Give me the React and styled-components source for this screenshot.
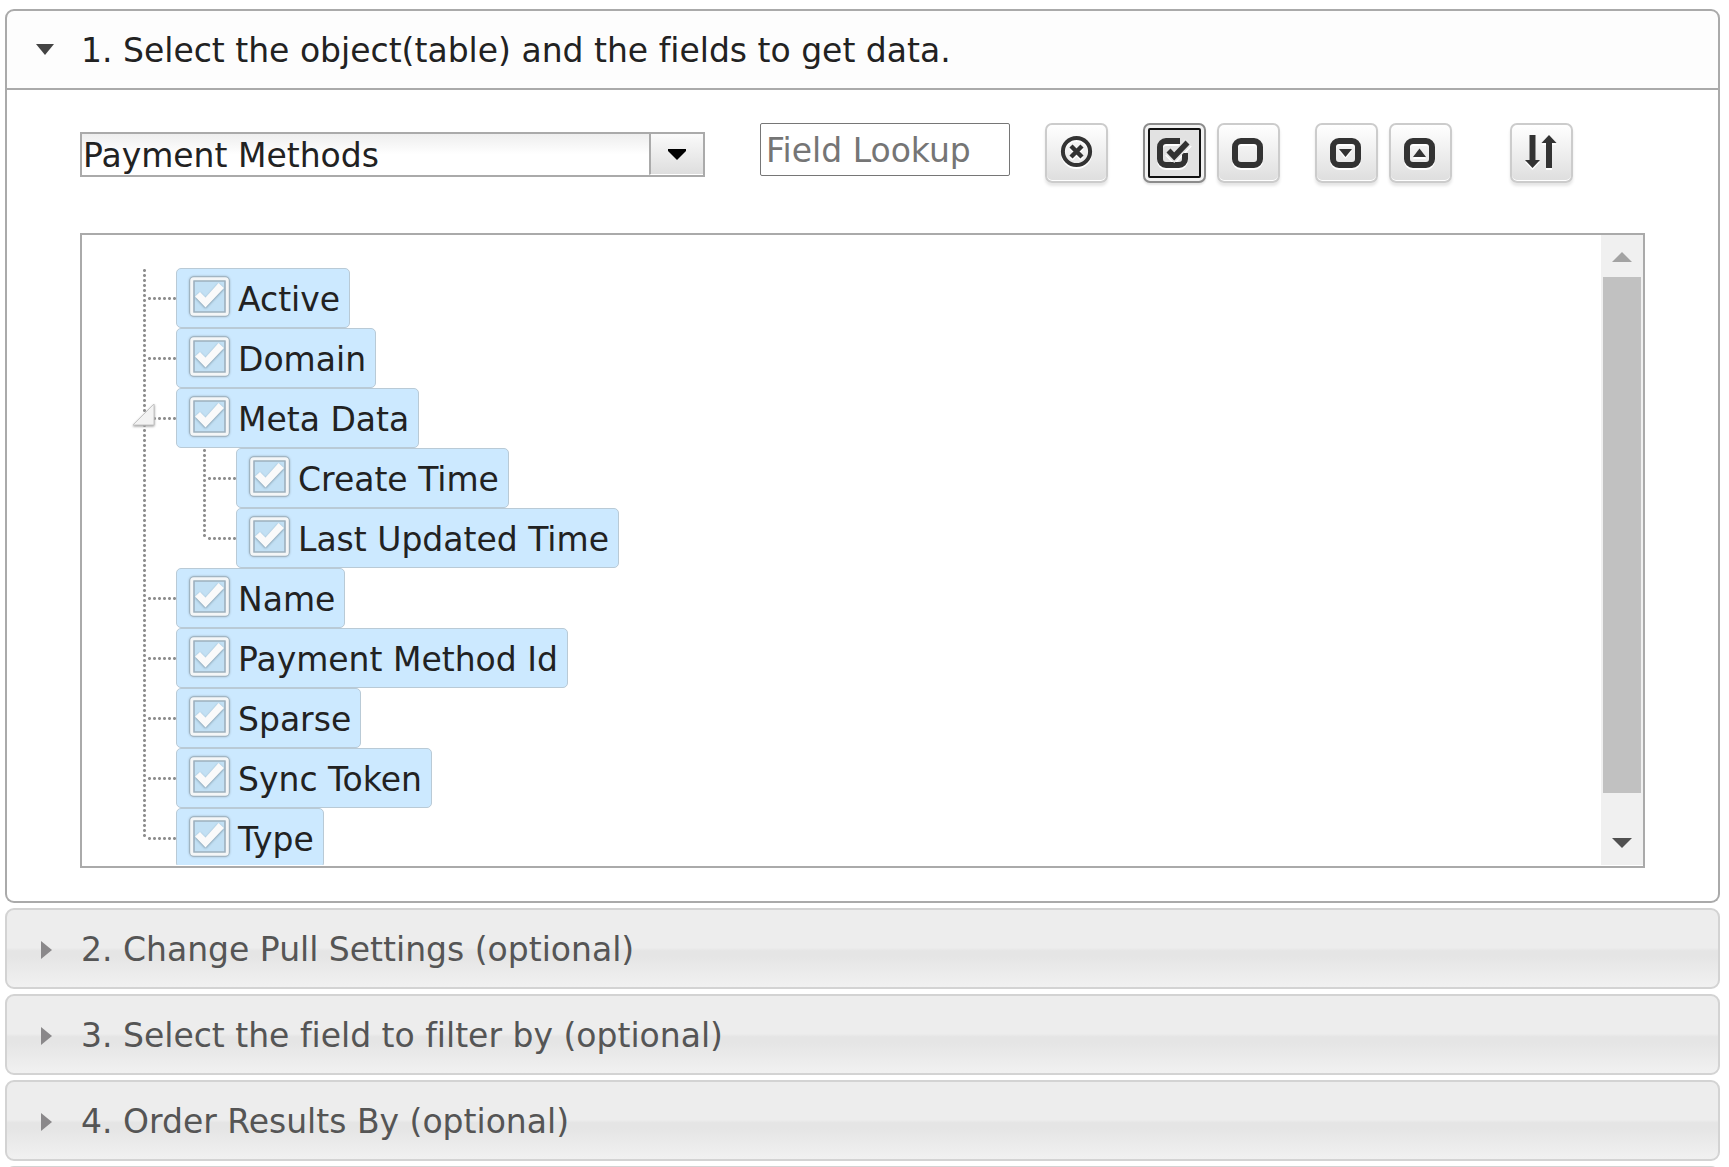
import { useState } from "react";
import styled, { createGlobalStyle, css } from "styled-components";

const GlobalStyle = createGlobalStyle`
  * {
    box-sizing: border-box;
  }
  body {
    margin: 0;
    background: #fff;
    font-family: Verdana, "DejaVu Sans", sans-serif;
    font-size: 33px;
    font-variant-ligatures: none;
    color: #222;
  }
`;

const tables = ["Payment Methods"];

const fields = [
  { label: "Active" },
  { label: "Domain" },
  {
    label: "Meta Data",
    children: [{ label: "Create Time" }, { label: "Last Updated Time" }],
  },
  { label: "Name" },
  { label: "Payment Method Id" },
  { label: "Sparse" },
  { label: "Sync Token" },
  { label: "Type" },
];

const sections = [
  "2. Change Pull Settings (optional)",
  "3. Select the field to filter by (optional)",
  "4. Order Results By (optional)",
];

const ClearIcon = () => (
  <Icon viewBox="0 0 37 36">
    <circle cx="18.5" cy="16.5" r="13.6" fill="none" stroke="#333" strokeWidth="4" />
    <path d="M13 11l11 11M24 11l-11 11" fill="none" stroke="#333" strokeWidth="4.4" />
  </Icon>
);

const CheckAllIcon = () => (
  <Icon viewBox="0 0 37 36">
    <path
      d="M24 6H10a6 6 0 0 0-6 6v12a6 6 0 0 0 6 6h13a6 6 0 0 0 6-6v-6"
      fill="none"
      stroke="#333"
      strokeWidth="6"
    />
    <path d="M12.5 15.5l5.7 6L32.5 6.5" fill="none" stroke="#e6e6e6" strokeWidth="9" />
    <path d="M12.5 15.5l5.7 6L31.5 7.5" fill="none" stroke="#333" strokeWidth="5.5" />
  </Icon>
);

const BoxIcon = ({ children }) => (
  <Icon viewBox="0 0 37 36">
    <rect x="5" y="6" width="25" height="24" rx="6" fill="none" stroke="#333" strokeWidth="6" />
    {children}
  </Icon>
);

const SortIcon = () => (
  <Icon viewBox="0 0 37 36">
    <path d="M6.5 0h6v25h4.500l-7.500 8-7.500-8h4.500z" fill="#333" />
    <path d="M23 33h6V8h4.500L26 0l-7.500 8H23z" fill="#333" />
  </Icon>
);

const TreeNode = ({ node, last }) => (
  <NodeItem $last={last}>
    <NodeRow>
      {node.children && (
        <Toggle aria-label={"Collapse " + node.label}>
          <ToggleIcon viewBox="0 0 26 26">
            <path d="M23 2v21H2z" fill="#f3f3f3" stroke="#c4c4c4" strokeWidth="1" strokeLinejoin="round" />
          </ToggleIcon>
        </Toggle>
      )}
      <NodeLabel>
        <CheckHolder>
          <Check type="checkbox" defaultChecked />
          <CheckMark viewBox="0 0 41 41">
            <rect x="3" y="3" width="35" height="35" rx="2" fill="#c2e0f4" stroke="#9db0bd" strokeWidth="5.6" />
            <rect x="2.7" y="2.7" width="35.6" height="35.6" rx="2" fill="none" stroke="#f4f6f7" strokeWidth="3" />
            <CheckTick d="M6 20.500l5-4.500 5.500 5.500L29.500 7l5.500 5-18.500 19.500z" fill="#fafafa" />
          </CheckMark>
        </CheckHolder>
        <span>{node.label}</span>
      </NodeLabel>
    </NodeRow>
    {node.children && (
      <NodeList $nested>
        {node.children.map((child, i) => (
          <TreeNode key={child.label} node={child} last={i === node.children.length - 1} />
        ))}
      </NodeList>
    )}
  </NodeItem>
);

const App = () => {
  const [lookup, setLookup] = useState("");

  return (
    <Page>
      <GlobalStyle />
      <OpenSection>
        <Header $open aria-expanded="true">
          <HeaderArrow viewBox="0 0 20 18">
            <path d="M1 2h18l-9 11z" fill="#444" />
          </HeaderArrow>
          1. Select the object(table) and the fields to get data.
        </Header>
        <Panel>
          <Toolbar>
            <SelectBox>
              <Select aria-label="Object">
                {tables.map((t) => (
                  <option key={t}>{t}</option>
                ))}
              </Select>
              <SelectArrow>
                <svg width="18" height="11" viewBox="0 0 18 11">
                  <path d="M0 0h18v2L9 11 0 2z" fill="#000" />
                </svg>
              </SelectArrow>
            </SelectBox>
            <Lookup
              type="text"
              aria-label="Field Lookup"
              placeholder="Field Lookup"
              value={lookup}
              onChange={(e) => setLookup(e.target.value)}
            />
            <ButtonGroup>
              <ToolButton aria-label="Clear lookup" onClick={() => setLookup("")}>
                <ClearIcon />
              </ToolButton>
            </ButtonGroup>
            <ButtonGroup>
              <ToolButton $active aria-label="Check all">
                <CheckAllIcon />
              </ToolButton>
              <ToolButton aria-label="Uncheck all">
                <BoxIcon />
              </ToolButton>
            </ButtonGroup>
            <ButtonGroup>
              <ToolButton aria-label="Expand all">
                <BoxIcon>
                  <path d="M11 14h13l-6.500 8z" fill="#333" />
                </BoxIcon>
              </ToolButton>
              <ToolButton aria-label="Collapse all">
                <BoxIcon>
                  <path d="M11 22h13l-6.500-8.500z" fill="#333" />
                </BoxIcon>
              </ToolButton>
            </ButtonGroup>
            <ButtonGroup $apart>
              <ToolButton aria-label="Sort fields">
                <SortIcon />
              </ToolButton>
            </ButtonGroup>
          </Toolbar>
          <TreeBox>
            <TreeView>
              <NodeList>
                {fields.map((node, i) => (
                  <TreeNode key={node.label} node={node} last={i === fields.length - 1} />
                ))}
              </NodeList>
            </TreeView>
            <ScrollBar>
              <ScrollEnd>
                <svg width="20" height="10" viewBox="0 0 20 10">
                  <path d="M0 10h20L10 0z" fill="#a3a3a3" />
                </svg>
              </ScrollEnd>
              <Thumb />
              <ScrollEnd>
                <svg width="20" height="10" viewBox="0 0 20 10">
                  <path d="M0 0h20L10 10z" fill="#505050" />
                </svg>
              </ScrollEnd>
            </ScrollBar>
          </TreeBox>
        </Panel>
      </OpenSection>
      {sections.map((title) => (
        <Header key={title} aria-expanded="false">
          <HeaderArrow viewBox="0 0 20 18">
            <path d="M6 0v18l11-9z" fill="#8a888a" />
          </HeaderArrow>
          {title}
        </Header>
      ))}
      <Header as="div" />
    </Page>
  );
};

const Page = styled.main`
  display: flex;
  flex-direction: column;
  gap: 5px;
  height: 100vh;
  padding: 9px 9px 0 5px;
  overflow: hidden;
`;

const OpenSection = styled.section`
  flex-shrink: 0;
`;

const Header = styled.button`
  display: flex;
  align-items: center;
  flex-shrink: 0;
  gap: 26px;
  width: 100%;
  height: 81px;
  padding: 2px 28px 0;
  border: 2px solid #d3d3d3;
  border-radius: 9px;
  background: linear-gradient(#ededed 49%, #e5e5e5 53%, #e5e5e5 60%, #f1f1f1);
  color: #555;
  font: inherit;
  text-align: left;

  ${(props) =>
    props.$open &&
    css`
      border-color: #aaa;
      border-radius: 9px 9px 0 0;
      background: #fdfdfd;
      color: #222;
    `}
`;

const HeaderArrow = styled.svg`
  flex-shrink: 0;
  width: 20px;
  height: 18px;
`;

const Panel = styled.div`
  padding: 33px 73px;
  border: 2px solid #aaa;
  border-top: none;
  border-radius: 0 0 9px 9px;
`;

const Toolbar = styled.div`
  display: flex;
  align-items: flex-start;
  margin-bottom: 50px;
`;

const SelectBox = styled.div`
  display: grid;
  flex: 0 1 625px;
  height: 45px;
  margin: 9px 55px 0 0;
  border: 2px solid #aaa;

  & > * {
    grid-area: 1 / 1;
  }
`;

const Select = styled.select`
  appearance: none;
  width: 100%;
  padding: 2px 54px 0 1px;
  border: none;
  border-radius: 0;
  background: linear-gradient(#eee, #fff 50%);
  color: #222;
  font: inherit;
`;

const SelectArrow = styled.span`
  display: flex;
  align-items: center;
  justify-content: center;
  justify-self: end;
  width: 54px;
  border-left: 2px solid #aaa;
  border-bottom: 1px solid #fff;
  background: linear-gradient(#fafafa, #dedede);
  pointer-events: none;
`;

const Lookup = styled.input`
  width: 250px;
  height: 53px;
  padding: 2px 5px 0;
  border: 1px solid #767676;
  border-radius: 2px;
  font: inherit;

  &::placeholder {
    color: #757575;
  }
`;

const ButtonGroup = styled.div`
  display: flex;
  gap: 11px;
  margin-left: ${(props) => (props.$apart ? "58px" : "35px")};
`;

const ToolButton = styled.button`
  display: flex;
  align-items: center;
  justify-content: center;
  width: 63px;
  height: 60px;
  padding: 0;
  border: 2px solid #ccc;
  border-radius: 7px;
  background: linear-gradient(#fff, #dedede);
  box-shadow: inset 0 -1px 0 #fff, 0 3px 3px rgba(0, 0, 0, 0.1);

  ${(props) =>
    props.$active &&
    css`
      border-color: #8c8c8c;
      background: #e2e2e2;
      box-shadow: inset 0 0 0 3px #f2f2f2, 0 2px 2px rgba(0, 0, 0, 0.1);
      outline: 2px solid #111;
      outline-offset: -7px;
    `}
`;

const Icon = styled.svg`
  width: 37px;
  height: 36px;
  filter: drop-shadow(0 2px 0 #fff);
`;

const TreeBox = styled.div`
  display: flex;
  height: 635px;
  border: 2px solid #aaa;
`;

const TreeView = styled.div`
  flex: 1;
  margin-bottom: 1px;
  padding: 33px 34px 0;
  overflow: hidden;
`;

const NodeList = styled.ul`
  margin: 0;
  padding: 0 0 0 ${(props) => (props.$nested ? "60px" : "0")};
  list-style: none;
`;

const dots = "radial-gradient(circle, #8e8e8e 1px, transparent 2px)";

/* dotted guide runs down the whole item, except for the last one where it stops mid row */
const NodeItem = styled.li`
  background: ${dots} 26px 0 / 5px 5px repeat-y;
  ${(props) =>
    props.$last &&
    css`
      background: linear-gradient(#fff, #fff) 26px 31px / 5px 100% no-repeat,
        ${dots} 26px 0 / 5px 5px repeat-y;
    `}
`;

const NodeRow = styled.div`
  position: relative;
  display: flex;
  align-items: center;
  height: 60px;

  &::before {
    content: "";
    width: 30px;
    height: 5px;
    margin-left: 31px;
    margin-right: -1px;
    background: ${dots} 0 0 / 5px 5px;
  }
`;

const Toggle = styled.button`
  position: absolute;
  left: 15px;
  top: 14px;
  width: 26px;
  height: 26px;
  padding: 0;
  border: none;
  background: none;
`;

const ToggleIcon = styled.svg`
  display: block;
  width: 26px;
  height: 26px;
  filter: drop-shadow(0 1px 1px #999);
`;

const NodeLabel = styled.label`
  display: flex;
  align-items: center;
  gap: 8px;
  height: 60px;
  padding: 0 9px 0 12px;
  border: 1px solid #b9cad6;
  border-radius: 5px;
  background: #cce9ff;
  white-space: nowrap;

  & > span:last-child {
    padding-top: 3px;
  }
`;

const CheckHolder = styled.span`
  display: grid;
  margin-bottom: 4px;

  & > * {
    grid-area: 1 / 1;
  }
`;

const Check = styled.input`
  appearance: none;
  width: 41px;
  height: 41px;
  margin: 0;
`;

const CheckMark = styled.svg`
  width: 41px;
  height: 41px;
  pointer-events: none;
  filter: drop-shadow(0 0 1px #9db0bd);
`;

const CheckTick = styled.path`
  filter: drop-shadow(0 1px 1px #7f98a8);
`;

const ScrollBar = styled.div`
  display: flex;
  flex-direction: column;
  width: 42px;
  margin-bottom: 1px;
  background: #f0f0f0;
`;

const ScrollEnd = styled.div`
  display: flex;
  align-items: center;
  justify-content: center;
  height: 42px;
  padding-top: 2px;

  &:last-child {
    margin-top: auto;
    padding: 0 0 2px;
  }
`;

const Thumb = styled.div`
  height: 516px;
  margin: 0 2px;
  background: #c1c1c1;
`;

export default App;
